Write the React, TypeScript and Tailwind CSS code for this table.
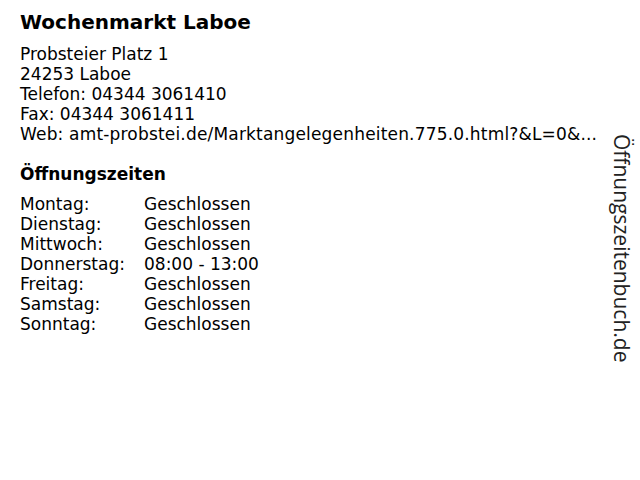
export default function App() {
  const hours: [string, string][] = [
    ["Montag:", "Geschlossen"],
    ["Dienstag:", "Geschlossen"],
    ["Mittwoch:", "Geschlossen"],
    ["Donnerstag:", "08:00 - 13:00"],
    ["Freitag:", "Geschlossen"],
    ["Samstag:", "Geschlossen"],
    ["Sonntag:", "Geschlossen"],
  ];
  return (
    <div className="w-[640px] h-[480px] bg-white flex text-black overflow-hidden">
      <div className="flex-1 min-w-0 pl-5 pt-[9px] font-['DejaVu_Sans',sans-serif]">
        <h1 className="text-[20px] leading-[26px] font-bold">Wochenmarkt Laboe</h1>
        <div className="mt-[9px] text-[17px] leading-[20px]">
          <div>Probsteier Platz 1</div>
          <div>24253 Laboe</div>
          <div>Telefon: 04344 3061410</div>
          <div>Fax: 04344 3061411</div>
          <div className="whitespace-nowrap tracking-[0.18px]">Web: amt-probstei.de/Marktangelegenheiten.775.0.html?&amp;L=0&amp;...</div>
        </div>
        <h2 className="mt-[20px] text-[17px] leading-[20px] font-bold">Öffnungszeiten</h2>
        <div className="mt-[10px] text-[17px] leading-[20px]">
          {hours.map(([d, h]) => (
            <div key={d} className="flex">
              <span className="w-[124px]">{d}</span>
              <span>{h}</span>
            </div>
          ))}
        </div>
      </div>
      <div className="w-[36px] pt-[134px] flex justify-center">
        <div className="[writing-mode:vertical-rl] font-['Open_Sans',sans-serif] text-[21px] leading-[22px] text-[#222]">
          Öffnungszeitenbuch.de
        </div>
      </div>
    </div>
  );
}
